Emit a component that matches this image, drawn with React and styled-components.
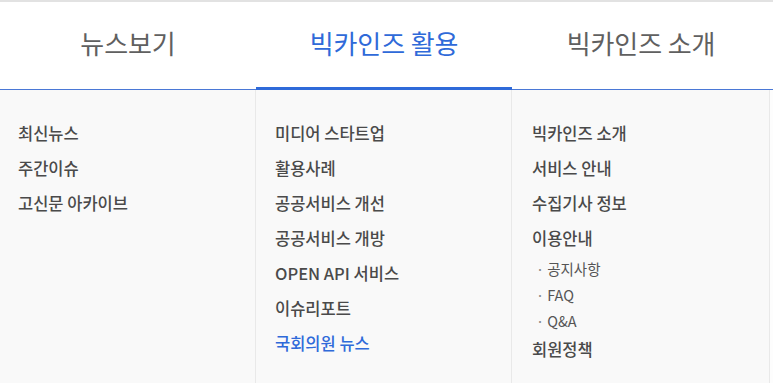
import React from "react";
import styled, { createGlobalStyle } from "styled-components";

const GlobalStyle = createGlobalStyle`
  html, body {
    margin: 0;
    padding: 0;
    background: #ffffff;
  }
  body {
    font-family: "Noto Sans CJK KR", "Noto Sans", sans-serif;
  }
`;

const menus = [
  {
    title: "뉴스보기",
    items: [{ label: "최신뉴스" }, { label: "주간이슈" }, { label: "고신문 아카이브" }],
  },
  {
    title: "빅카인즈 활용",
    active: true,
    items: [
      { label: "미디어 스타트업" },
      { label: "활용사례" },
      { label: "공공서비스 개선" },
      { label: "공공서비스 개방" },
      { label: "OPEN API 서비스" },
      { label: "이슈리포트" },
      { label: "국회의원 뉴스", current: true },
    ],
  },
  {
    title: "빅카인즈 소개",
    items: [
      { label: "빅카인즈 소개" },
      { label: "서비스 안내" },
      { label: "수집기사 정보" },
      { label: "이용안내", subs: ["공지사항", "FAQ", "Q&A"] },
      { label: "회원정책" },
    ],
  },
];

const App = () => {
  return (
    <>
      <GlobalStyle />
      <Nav>
        <TabBar>
          {menus.map((menu) => (
            <Tab key={menu.title} active={menu.active ? "true" : "false"}>
              {menu.title}
            </Tab>
          ))}
        </TabBar>
        <Panel>
          {menus.map((menu) => (
            <Column key={menu.title}>
              {menu.items.map((item) => (
                <React.Fragment key={item.label}>
                  <Item current={item.current ? "true" : "false"}>{item.label}</Item>
                  {item.subs && (
                    <SubList>
                      {item.subs.map((sub) => (
                        <SubItem key={sub}>{sub}</SubItem>
                      ))}
                    </SubList>
                  )}
                </React.Fragment>
              ))}
            </Column>
          ))}
          <Edge />
        </Panel>
      </Nav>
    </>
  );
};

const Nav = styled.nav`
  width: 773px;
  height: 383px;
  display: flex;
  flex-direction: column;
  border-top: 2px solid #e2e2e2;
  box-sizing: border-box;
  overflow: hidden;
`;

const TabBar = styled.div`
  display: grid;
  grid-template-columns: 256px 256px 258px 3px;
  height: 88px;
  border-bottom: 1px solid #4a78d6;
  box-sizing: border-box;
  background: #fff;
`;

const Tab = styled.div`
  display: flex;
  align-items: center;
  justify-content: center;
  padding-bottom: 8px;
  font-size: 26px;
  font-weight: 400;
  letter-spacing: -0.1px;
  color: ${({ active }) => (active === "true" ? "#2f6ad9" : "#606060")};
  box-shadow: ${({ active }) =>
    active === "true" ? "inset 0 -3px 0 #2f6ad9" : "none"};
  margin-bottom: -1px;
`;

const Panel = styled.div`
  flex: 1;
  display: grid;
  grid-template-columns: 256px 256px 258px 3px;
  background: #f9f9f9;
`;

const Column = styled.ul`
  list-style: none;
  margin: 0;
  padding: 26px 0 0 18px;
  border-right: 1px solid #e9e9e9;
  display: flex;
  flex-direction: column;

  &:nth-child(2) {
    padding-left: 19px;
  }
  &:nth-child(3) {
    padding-left: 20px;
  }
`;

const Edge = styled.div`
  background: #fdfdfd;
`;

const Item = styled.li`
  height: 35px;
  line-height: 35px;
  font-size: 16.5px;
  font-weight: 500;
  color: ${({ current }) => (current === "true" ? "#2f6ad9" : "#4a4a4a")};
  white-space: nowrap;
`;

const SubList = styled.ul`
  list-style: none;
  margin: 0 0 -2px;
  padding: 0 0 0 4px;
`;

const SubItem = styled.li`
  height: 26px;
  line-height: 26px;
  font-size: 14.5px;
  color: #555;

  &::before {
    content: "·";
    margin-right: 3px;
    color: #888;
  }
`;

export default App;
